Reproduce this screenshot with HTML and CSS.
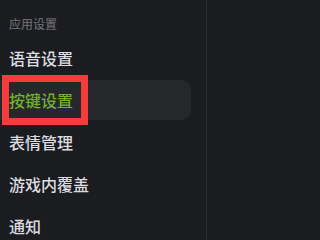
FILE: index.html
```html
<!DOCTYPE html>
<html lang="zh">
<head>
<meta charset="utf-8">
<link rel="stylesheet" href="styles.css">
</head>
<body>
<div class="sidebar">
  <div class="section-title">应用设置</div>
  <ul class="menu">
    <li class="item">语音设置</li>
    <li class="item active">按键设置</li>
    <li class="item">表情管理</li>
    <li class="item">游戏内覆盖</li>
    <li class="item">通知</li>
  </ul>
  <div class="annotation"></div>
</div>
</body>
</html>
```

FILE: styles.css
```css
html, body {
  margin: 0;
  padding: 0;
  background: #1b1c1f;
  height: 100%;
  overflow: hidden;
}
body {
  font-family: "Noto Sans CJK SC", "Noto Sans", sans-serif;
}
.sidebar {
  position: relative;
  width: 207px;
  height: 100%;
  border-right: 1px solid #2a2b2f;
  padding-top: 16px;
  box-sizing: border-box;
}
.section-title {
  padding-left: 9px;
  font-size: 12px;
  line-height: 16px;
  font-weight: 500;
  color: #66686d;
}
.menu {
  list-style: none;
  margin: 6px 0 0 0;
  padding: 0;
  width: 191px;
  display: flex;
  flex-direction: column;
  gap: 2px;
}
.item {
  height: 40px;
  line-height: 40px;
  padding-left: 9px;
  font-size: 16px;
  font-weight: 500;
  color: #dcdde0;
  border-radius: 0 10px 10px 0;
}
.item.active {
  background: #26272b;
  color: #71b22a;
}
.annotation {
  position: absolute;
  left: 2px;
  top: 75px;
  width: 86px;
  height: 50px;
  border: 7px solid #f53b3b;
  box-sizing: border-box;
}
```
